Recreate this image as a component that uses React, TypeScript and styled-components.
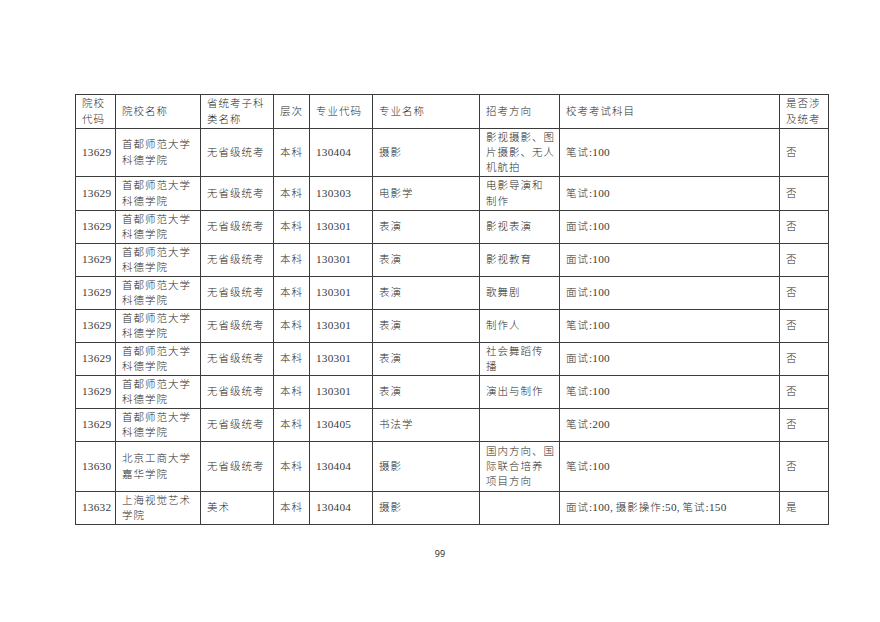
import React from "react";
import styled, { createGlobalStyle } from "styled-components";

const Global = createGlobalStyle`
  html, body { margin: 0; padding: 0; background: #ffffff; }
  body { width: 880px; height: 622px; overflow: hidden; }
`;

const Page = styled.div`
  width: 880px;
  height: 622px;
  box-sizing: border-box;
  padding: 94px 0 0 75px;
  background: #fff;
  font-family: "Liberation Serif", "Noto Sans CJK SC", serif;
  color: #2b2b2b;
`;

const Table = styled.table`
  border-collapse: collapse;
  table-layout: fixed;
  width: 753px;
`;

const Row = styled.tr<{ $h: number }>`
  height: ${(p) => p.$h}px;
`;

const Cell = styled.td`
  border: 1px solid #3c3c3c;
  padding: 0 4px 0 6px;
  vertical-align: middle;
  text-align: left;
  font-size: 10.5px;
  line-height: 15.3px;
  letter-spacing: 1px;
  font-weight: 300;
  white-space: nowrap;
  overflow: hidden;
`;

const HeadCell = styled(Cell).attrs({ as: "th" })`
  font-weight: 300;
`;

const Num = styled.span`
  font-size: 11.3px;
  letter-spacing: 0.2px;
  font-weight: 400;
  color: #3a3a3a;
`;

const Comma = styled.span`
  font-size: 11.3px;
  letter-spacing: 0;
  font-weight: 400;
  color: #3a3a3a;
  margin-right: 3px;
`;

const Footer = styled.div`
  width: 880px;
  margin-left: -75px;
  margin-top: 23px;
  text-align: center;
  font-family: "Open Sans", "Liberation Sans", sans-serif;
  font-size: 9px;
  line-height: 12px;
  color: #222;
`;

const widths = [40, 85, 73, 36, 63, 107, 80, 220, 49];

type R = {
  h: number;
  code: string;
  school: string[];
  cat: string;
  level: string;
  mcode: string;
  major: string;
  dir: string[];
  exam: React.ReactNode;
  yes: string;
};

const kd = ["首都师范大学", "科德学院"];

const rows: R[] = [
  { h: 48, code: "13629", school: kd, cat: "无省级统考", level: "本科", mcode: "130404", major: "摄影", dir: ["影视摄影、图", "片摄影、无人", "机航拍"], exam: <>笔试<Num>:100</Num></>, yes: "否" },
  { h: 34, code: "13629", school: kd, cat: "无省级统考", level: "本科", mcode: "130303", major: "电影学", dir: ["电影导演和", "制作"], exam: <>笔试<Num>:100</Num></>, yes: "否" },
  { h: 33, code: "13629", school: kd, cat: "无省级统考", level: "本科", mcode: "130301", major: "表演", dir: ["影视表演"], exam: <>面试<Num>:100</Num></>, yes: "否" },
  { h: 33, code: "13629", school: kd, cat: "无省级统考", level: "本科", mcode: "130301", major: "表演", dir: ["影视教育"], exam: <>面试<Num>:100</Num></>, yes: "否" },
  { h: 33, code: "13629", school: kd, cat: "无省级统考", level: "本科", mcode: "130301", major: "表演", dir: ["歌舞剧"], exam: <>面试<Num>:100</Num></>, yes: "否" },
  { h: 33, code: "13629", school: kd, cat: "无省级统考", level: "本科", mcode: "130301", major: "表演", dir: ["制作人"], exam: <>笔试<Num>:100</Num></>, yes: "否" },
  { h: 33, code: "13629", school: kd, cat: "无省级统考", level: "本科", mcode: "130301", major: "表演", dir: ["社会舞蹈传", "播"], exam: <>面试<Num>:100</Num></>, yes: "否" },
  { h: 33, code: "13629", school: kd, cat: "无省级统考", level: "本科", mcode: "130301", major: "表演", dir: ["演出与制作"], exam: <>笔试<Num>:100</Num></>, yes: "否" },
  { h: 33, code: "13629", school: kd, cat: "无省级统考", level: "本科", mcode: "130405", major: "书法学", dir: [], exam: <>笔试<Num>:200</Num></>, yes: "否" },
  { h: 50, code: "13630", school: ["北京工商大学", "嘉华学院"], cat: "无省级统考", level: "本科", mcode: "130404", major: "摄影", dir: ["国内方向、国", "际联合培养", "项目方向"], exam: <>笔试<Num>:100</Num></>, yes: "否" },
  {
    h: 33, code: "13632", school: ["上海视觉艺术", "学院"], cat: "美术", level: "本科", mcode: "130404", major: "摄影", dir: [],
    exam: <>面试<Num>:100</Num><Comma>,</Comma>摄影操作<Num>:50</Num><Comma>,</Comma>笔试<Num>:150</Num></>, yes: "是",
  },
];

const Lines = ({ items }: { items: string[] }) => (
  <>
    {items.map((t, i) => (
      <React.Fragment key={i}>
        {i > 0 && <br />}
        {t}
      </React.Fragment>
    ))}
  </>
);

export default function App() {
  return (
    <>
      <Global />
      <Page>
        <Table>
          <colgroup>
            {widths.map((w, i) => (
              <col key={i} style={{ width: w }} />
            ))}
          </colgroup>
          <thead>
            <Row $h={34}>
              <HeadCell>院校<br />代码</HeadCell>
              <HeadCell>院校名称</HeadCell>
              <HeadCell>省统考子科<br />类名称</HeadCell>
              <HeadCell>层次</HeadCell>
              <HeadCell>专业代码</HeadCell>
              <HeadCell>专业名称</HeadCell>
              <HeadCell>招考方向</HeadCell>
              <HeadCell>校考考试科目</HeadCell>
              <HeadCell>是否涉<br />及统考</HeadCell>
            </Row>
          </thead>
          <tbody>
            {rows.map((r, i) => (
              <Row key={i} $h={r.h}>
                <Cell><Num>{r.code}</Num></Cell>
                <Cell><Lines items={r.school} /></Cell>
                <Cell>{r.cat}</Cell>
                <Cell>{r.level}</Cell>
                <Cell><Num>{r.mcode}</Num></Cell>
                <Cell>{r.major}</Cell>
                <Cell><Lines items={r.dir} /></Cell>
                <Cell>{r.exam}</Cell>
                <Cell>{r.yes}</Cell>
              </Row>
            ))}
          </tbody>
        </Table>
        <Footer>99</Footer>
      </Page>
    </>
  );
}
